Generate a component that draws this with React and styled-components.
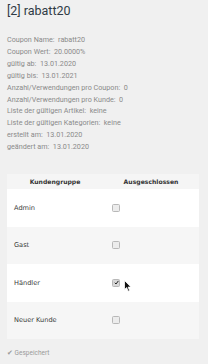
import React from "react";
import styled, { createGlobalStyle } from "styled-components";

const Global = createGlobalStyle`
  html, body { margin: 0; padding: 0; background: #f0f0f0; }
  body {
    font-family: Roboto, "Liberation Sans", Arial, sans-serif;
    -webkit-font-smoothing: antialiased;
  }
`;

const Page = styled.div`
  position: relative;
  width: 208px;
  height: 364px;
  box-sizing: border-box;
  padding: 4px 8px 0 7px;
  overflow: hidden;
`;

const Title = styled.h1`
  margin: 0;
  font-size: 12.5px;
  line-height: 14px;
  font-weight: 400;
  color: #2f3b45;
`;

const Info = styled.div`
  margin-top: 16px;
  display: flex;
  flex-direction: column;
`;

const InfoLine = styled.div`
  font-size: 7.2px;
  line-height: 11.9px;
  color: #8a8a8a;
  white-space: pre;
`;

const Table = styled.table`
  margin-top: 21px;
  width: 192px;
  border-collapse: collapse;
  font-family: "DejaVu Sans", Verdana, sans-serif;
`;

const Th = styled.th`
  height: 15px;
  padding: 0;
  font-size: 6.1px;
  font-weight: 700;
  color: #333;
  text-align: center;
  background: #f5f5f5;
  width: 50%;
`;

const Row = styled.tr`
  background: ${(p) => (p.$alt ? "#f6f6f6" : "#ffffff")};
`;

const Td = styled.td`
  height: 37.5px;
  padding: 0 0 0 ${(p) => p.$pl || 7}px;
  font-size: 6.6px;
  color: #3a3a3a;
  vertical-align: middle;
`;

const Box = styled.span`
  display: inline-flex;
  align-items: center;
  justify-content: center;
  width: 6px;
  height: 6px;
  border: 1px solid #b8b8b8;
  border-radius: 1.5px;
  background: ${(p) => (p.$checked ? "#d8d8d8" : "#ececec")};
  vertical-align: middle;
`;

const Saved = styled.div`
  margin-top: 10px;
  font-size: 6.5px;
  color: #9a9a9a;
`;

const Cursor = styled.svg`
  position: absolute;
  left: 124px;
  top: 280px;
`;

const lines = [
  "Coupon Name:  rabatt20",
  "Coupon Wert:  20.0000%",
  "gültig ab:  13.01.2020",
  "gültig bis:  13.01.2021",
  "Anzahl/Verwendungen pro Coupon:  0",
  "Anzahl/Verwendungen pro Kunde:  0",
  "Liste der gültigen Artikel:  keine",
  "Liste der gültigen Kategorien:  keine",
  "erstellt am:  13.01.2020",
  "geändert am:  13.01.2020",
];

const groups = [
  { name: "Admin", checked: false },
  { name: "Gast", checked: false },
  { name: "Händler", checked: true },
  { name: "Neuer Kunde", checked: false },
];

export default function App() {
  return (
    <>
      <Global />
      <Page>
        <Title>[2] rabatt20</Title>
        <Info>
          {lines.map((l) => (
            <InfoLine key={l}>{l}</InfoLine>
          ))}
        </Info>
        <Table>
          <thead>
            <tr>
              <Th>Kundengruppe</Th>
              <Th>Ausgeschlossen</Th>
            </tr>
          </thead>
          <tbody>
            {groups.map((g, i) => (
              <Row key={g.name} $alt={i % 2 === 1}>
                <Td>{g.name}</Td>
                <Td $pl={9}>
                  <Box $checked={g.checked}>
                    {g.checked && (
                      <svg width="5" height="5" viewBox="0 0 10 10">
                        <path d="M1.5 5.5 L4 8 L8.8 1.8" fill="none" stroke="#222" strokeWidth="2" />
                      </svg>
                    )}
                  </Box>
                </Td>
              </Row>
            ))}
          </tbody>
        </Table>
        <Saved>✔ Gespeichert</Saved>
        <Cursor width="8" height="12" viewBox="0 0 8 12">
          <path d="M0.5 0.5 L0.5 9.5 L2.6 7.6 L4.2 11.2 L5.6 10.6 L4.1 7.1 L7 7.1 Z" fill="#111" stroke="#fff" strokeWidth="0.8" />
        </Cursor>
      </Page>
    </>
  );
}
